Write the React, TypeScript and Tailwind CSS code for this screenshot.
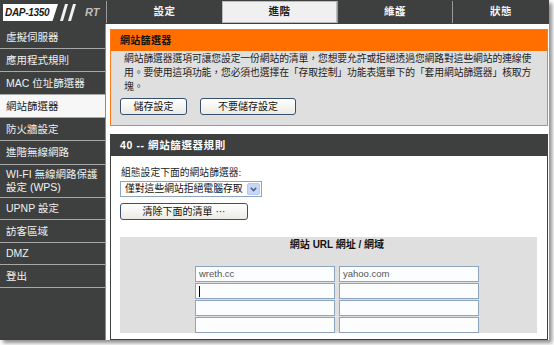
const menu = [
  { label: '虛擬伺服器', cls: 'h-[23px]' },
  { label: '應用程式規則', cls: 'h-[23px]' },
  { label: 'MAC 位址篩選器', cls: 'h-[23px]' },
  { label: '網站篩選器', cls: 'h-[23px]', active: true },
  { label: '防火牆設定', cls: 'h-[23px]' },
  { label: '進階無線網路', cls: 'h-[24px]' },
  { label: 'WI-FI 無線網路保護設定 (WPS)', cls: 'h-[33px]' },
  { label: 'UPNP 設定', cls: 'h-[22px]' },
  { label: '訪客區域', cls: 'h-[23px]' },
  { label: 'DMZ', cls: 'h-[22px]' },
  { label: '登出', cls: 'h-[23px]' },
];

const tabs = [
  { label: '設定', cls: 'w-[116px]' },
  { label: '進階', cls: 'w-[115px]', active: true },
  { label: '維護', cls: 'w-[115px]' },
  { label: '狀態', cls: 'flex-1' },
];

function XpButton({ label, cls }: { label: string; cls: string }) {
  return (
    <div
      className={`${cls} h-[17px] flex items-center justify-center rounded-[3px] border border-[#36506e] bg-gradient-to-b from-white to-[#ecebe4] text-[10px] text-[#111]`}
    >
      {label}
    </div>
  );
}

function Field({ value, caret }: { value?: string; caret?: boolean }) {
  return (
    <div className="w-[140px] h-[16px] border border-[#8fa5bf] bg-[#fcfdff] flex items-center pl-[3px] text-[9.5px] text-[#555]">
      {caret && <div className="w-px h-[11px] bg-black" />}
      {value}
    </div>
  );
}

export default function App() {
  return (
    <div className="w-[554px] h-[345px] bg-white font-['Liberation_Sans','Noto_Sans_CJK_TC',sans-serif]">
      <div className="w-[549px] h-[340px] bg-[#3e403f] flex flex-col shadow-[3px_3px_4px_rgba(0,0,0,0.45)] overflow-hidden">
        {/* Top bar */}
        <div className="h-[24px] flex">
          <div className="w-[106px] flex items-center pl-[3px] pt-[1px]">
            <div className="h-[17px] w-[55px] bg-white flex items-center pl-[2px] [clip-path:polygon(0_0,100%_0,90%_100%,0_100%)]">
              <span className="italic font-bold text-[10px] text-[#1a1a1a] tracking-[-0.3px]">DAP-1350</span>
            </div>
            <svg width="20" height="17" viewBox="0 0 20 17" className="ml-[1px]">
              <polygon points="6,0 9,0 4,17 1,17" fill="#f2f2f2" />
              <polygon points="14,0 17,0 12,17 9,17" fill="#f2f2f2" />
            </svg>
            <span className="ml-[6px] italic font-bold text-[11px] text-[#bdbdbd]">RT</span>
          </div>
          <div className="flex-1 flex pt-[1px] pb-[1px]">
            {tabs.map((t) => (
              <div
                key={t.label}
                className={`${t.cls} flex items-center justify-center border-l border-[#9a9a9a] text-[10.5px] font-bold tracking-[0.5px] ${
                  t.active ? 'bg-[#f0f0f0] text-[#222] border border-[#bbb]' : 'text-[#f4f4f4]'
                }`}
              >
                {t.label}
              </div>
            ))}
          </div>
        </div>

        <div className="flex-1 flex">
          {/* Sidebar */}
          <div className="w-[106px] pt-[2px] border-r border-[#8c8c8c]">
            {menu.map((m) => (
              <div
                key={m.label}
                className={`${m.cls} flex items-center pl-[6px] pr-[3px] border-b border-[#a8a8a8] text-[10.5px] leading-[13px] ${
                  m.active ? 'bg-[#f7f7f7] text-[#222]' : 'text-[#f0f0f0]'
                }`}
              >
                {m.label}
              </div>
            ))}
          </div>

          {/* Main */}
          <div className="flex-1 bg-white pl-[4px] pr-[1px] pt-[5px] flex flex-col">
            <div className="border border-[#ff7a1a]">
              <div className="h-[21px] bg-[#ff6f00] flex items-center pl-[9px] text-[10px] font-bold text-[#111] tracking-[0.3px]">
                網站篩選器
              </div>
              <div className="bg-[#dfdfdf] pl-[9px] pt-[1px] pb-[10px]">
                <p className="pl-[4px] text-[9.8px] leading-[14px] text-[#222] tracking-[-0.1px]">
                  網站篩選器選項可讓您設定一份網站的清單，您想要允許或拒絕透過您網路對這些網站的連線使
                  <br />
                  用。要使用這項功能，您必須也選擇在「存取控制」功能表選單下的「套用網站篩選器」核取方
                  <br />
                  塊。
                </p>
                <div className="flex gap-[13px] mt-[4px]">
                  <XpButton label="儲存設定" cls="w-[67px]" />
                  <XpButton label="不要儲存設定" cls="w-[96px]" />
                </div>
              </div>
            </div>

            <div className="mt-[8px] flex-1 border border-[#3e403f] flex flex-col">
              <div className="h-[21px] bg-[#3e403f] flex items-center pl-[9px] text-[10.5px] font-bold text-white tracking-[0.6px]">
                40 -- 網站篩選器規則
              </div>
              <div className="pl-[9px] pt-[11px]">
                <div className="pl-[1px] text-[9.8px] leading-[12px] text-[#222]">組態設定下面的網站篩選器:</div>
                <div className="mt-[2px] w-[142px] h-[16px] border border-[#8fa5bf] bg-white flex items-center justify-between pl-[4px] pr-[1px]">
                  <span className="text-[9.8px] text-[#111]">僅對這些網站拒絕電腦存取</span>
                  <div className="w-[13px] h-[12px] rounded-[2px] bg-[#c6d7fa] border border-[#b3c8f2] flex items-center justify-center">
                    <svg width="7" height="5" viewBox="0 0 7 5">
                      <polyline points="0.8,0.8 3.5,3.6 6.2,0.8" fill="none" stroke="#4d6185" strokeWidth="1.6" />
                    </svg>
                  </div>
                </div>
                <XpButton label="清除下面的清單 ···" cls="w-[128px] mt-[6px]" />
                <div className="mt-[17px] w-[417px] h-[96px] bg-[#dfdfdf]">
                  <div className="ml-[75px] w-[284px]">
                    <div className="pt-[2px] text-center text-[10px] font-bold text-[#111] leading-[12px]">
                      網站 URL 網址 / 網域
                    </div>
                    <div className="mt-[15px] grid grid-cols-[140px_140px] gap-x-[4px] gap-y-[1px]">
                      <Field value="wreth.cc" />
                      <Field value="yahoo.com" />
                      <Field caret />
                      <Field />
                      <Field />
                      <Field />
                      <Field />
                      <Field />
                    </div>
                  </div>
                </div>
              </div>
            </div>
          </div>
        </div>
      </div>
    </div>
  );
}
